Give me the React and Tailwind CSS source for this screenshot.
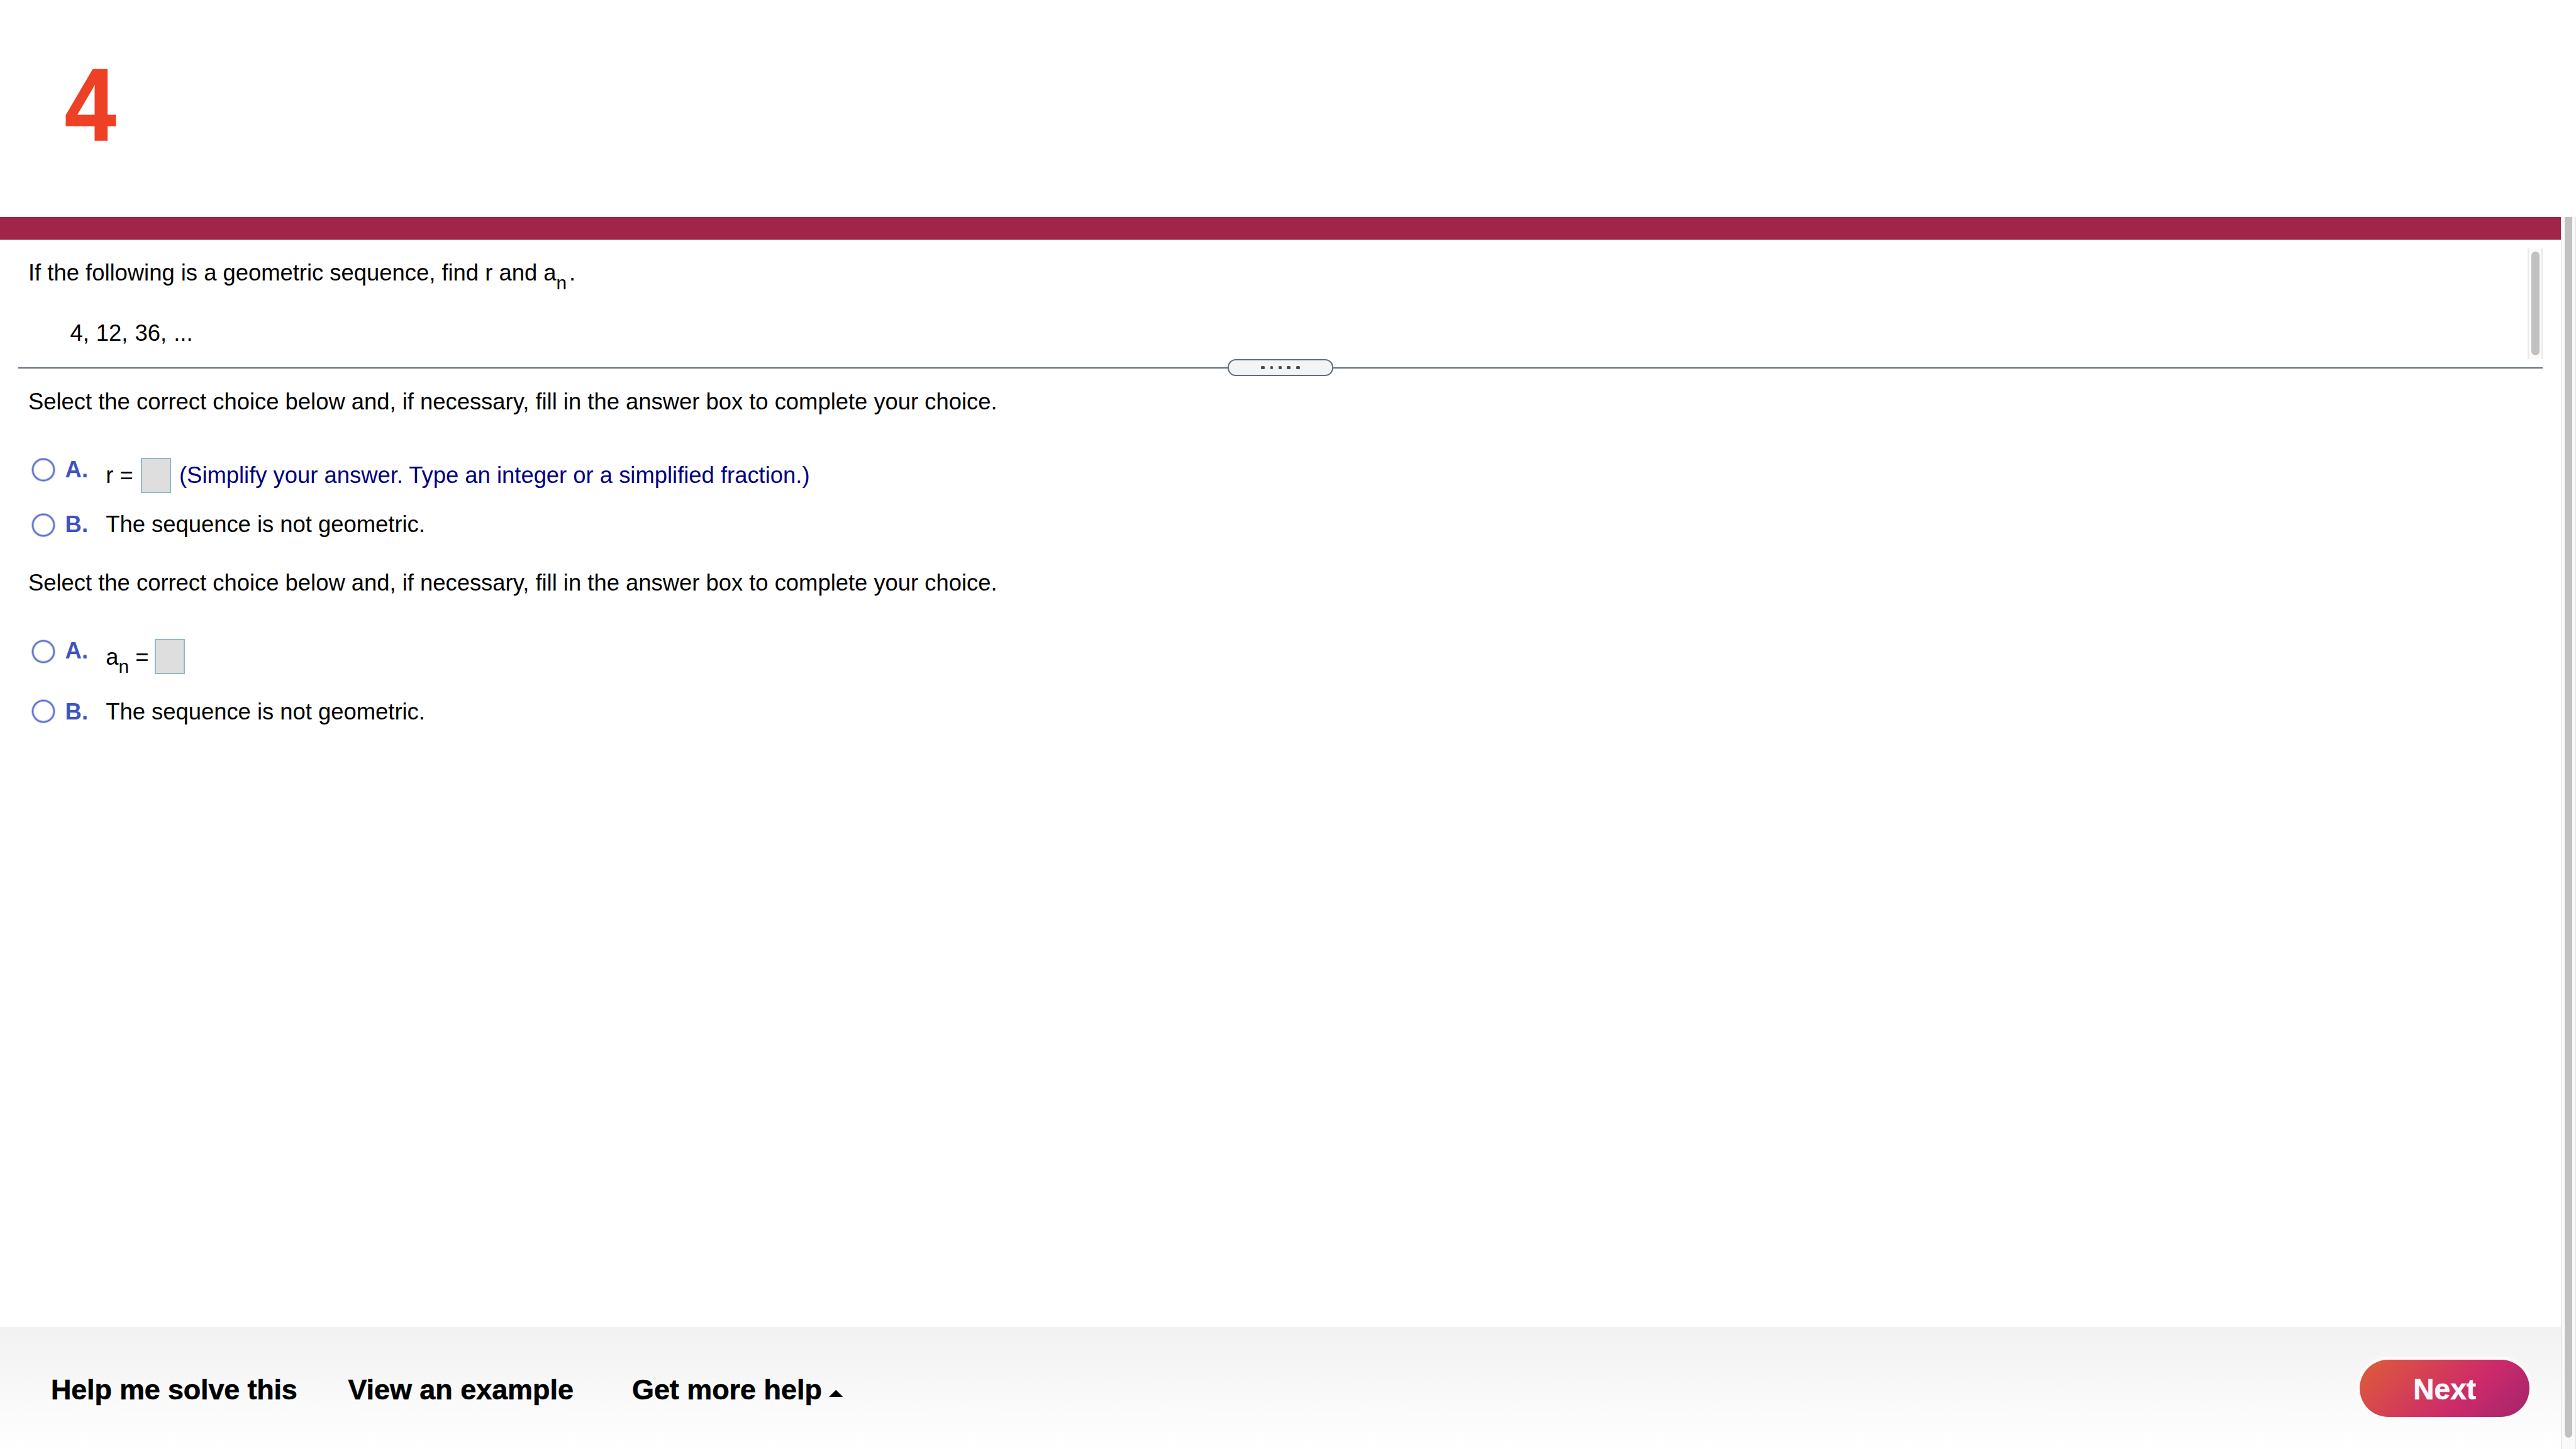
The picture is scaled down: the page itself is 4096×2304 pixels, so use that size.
const TEXT = "font-['Liberation_Sans',Arial,sans-serif]";

function AnswerBox() {
  return <span className="block h-[56px] w-[48px] shrink-0 border-2 border-[#95b7c8] bg-[#dedede]" />;
}

function Choice({ letter, className, radioClass, bodyClass, children }) {
  return (
    <div className={"flex items-start " + className}>
      <span className={"w-[53.6px] shrink-0 " + radioClass}>
        <span className="mx-[1px] block size-[36px] rounded-full border-2 border-[#5b70cd] bg-white shadow-[0_0_0_1px_#a9b5e8,inset_0_0_0_1px_#a9b5e8]" />
      </span>
      <span className="w-[64.6px] shrink-0 font-bold text-[#3c53c0]">{letter}.</span>
      <div className={"flex items-start whitespace-pre " + bodyClass}>{children}</div>
    </div>
  );
}

function QuestionPanel() {
  return (
    <section className="flex h-[201.6px] items-start justify-between pr-[28.8px] pt-[12.8px]">
      <div className="pl-[45px] pt-[16.6px]">
        <p className="h-[44px] whitespace-pre">
          If the following is a geometric sequence, find r and a
          <sub className="relative top-[14.4px] inline-block align-baseline text-[29.8px] leading-none">n</sub>
          <span className="ml-[4px]">.</span>
        </p>
        <p className="mt-[52px] pl-[66.4px] [word-spacing:1px]">4, 12, 36, ...</p>
      </div>
      <div className="flex h-[176px] w-[24px] justify-center border-x-2 border-[#e9e9e9] bg-[#fafafa] pt-[4.8px]">
        <div className="h-[164.8px] w-[12.8px] rounded-full bg-[#c1c1c1]" />
      </div>
    </section>
  );
}

function Divider() {
  return (
    <div className="flex h-[1.6px] items-center pl-[28.8px] pr-[28.8px]">
      <div className="h-[1.6px] flex-1 bg-[#5f6e7b]" />
      <div className="flex h-[27.2px] w-[168px] shrink-0 items-center justify-center gap-[8.4px] rounded-[13px] border-2 border-[#5f6e7b] bg-[#f3f4f6]">
        <i className="h-[5px] w-[6.4px] rounded-[1.5px] bg-[#4a4a4a]" />
        <i className="h-[5px] w-[4.8px] rounded-[1.5px] bg-[#4a4a4a]" />
        <i className="h-[5px] w-[4.8px] rounded-[1.5px] bg-[#4a4a4a]" />
        <i className="h-[5px] w-[6.4px] rounded-[1.5px] bg-[#4a4a4a]" />
        <i className="h-[5px] w-[6.4px] rounded-[1.5px] bg-[#4a4a4a]" />
      </div>
      <div className="h-[1.6px] flex-1 bg-[#5f6e7b]" />
    </div>
  );
}

function Answers() {
  const prompt =
    "Select the correct choice below and, if necessary, fill in the answer box to complete your choice.";
  return (
    <section className="flex flex-1 flex-col pl-[45px] pt-[31px]">
      <p>{prompt}</p>
      <div className="mt-[64.4px] flex flex-col pl-[5px]">
        <Choice letter="A" className="h-[59px]" radioClass="pt-[4px]" bodyClass="pt-[3px]">
          <span className="w-[55.8px] pt-[6.4px]">r =</span>
          <AnswerBox />
          <span className="pl-[13px] pt-[6.4px] text-[#00007f]">
            (Simplify your answer. Type an integer or a simplified fraction.)
          </span>
        </Choice>
        <Choice letter="B" className="mt-[27.6px] h-[44px]" radioClass="pt-[5px]" bodyClass="">
          The sequence is not geometric.
        </Choice>
      </div>
      <p className="mt-[49px]">{prompt}</p>
      <div className="mt-[64.4px] flex flex-col pl-[5px]">
        <Choice letter="A" className="h-[59px]" radioClass="pt-[5.4px]" bodyClass="pt-[3px]">
          <span className="w-[78.2px] pt-[6.8px]">
            a<sub className="relative top-[13px] inline-block align-baseline text-[29.8px] leading-none">n</sub> =
          </span>
          <AnswerBox />
        </Choice>
        <Choice letter="B" className="mt-[37.8px] h-[44px]" radioClass="pt-[3px]" bodyClass="">
          The sequence is not geometric.
        </Choice>
      </div>
    </section>
  );
}

function Footer() {
  return (
    <footer className="flex h-[193.6px] items-start bg-linear-to-b from-[#f1f1f1] to-white pl-[81px] pr-[49.6px] text-[44.9px] font-bold leading-[56px] text-black [-webkit-text-stroke:0.6px]">
      <span className="w-[472.4px] pt-[71.6px] tracking-[-0.14px]">Help me solve this</span>
      <span className="w-[451.6px] pt-[71.6px]">View an example</span>
      <span className="flex items-start pt-[71.6px]">
        Get more help
        <svg className="ml-[11px] mt-[27.6px] h-[11.2px] w-[22.4px]" viewBox="0 0 22 11" preserveAspectRatio="none">
          <path d="M11 0L22 11H0z" fill="#000" />
        </svg>
      </span>
      <button className="ml-auto mt-[51.2px] flex h-[91.2px] w-[270.4px] items-center justify-center rounded-full bg-[linear-gradient(135deg,#de5d38_0%,#cc2a6a_63%,#a2256d_100%)] pt-[3px] text-[46px] font-bold text-[#f8f9fd] ring-[5px] ring-[#fbfbfb]">
        Next
      </button>
    </footer>
  );
}

export default function App() {
  return (
    <div className={"flex h-[2304px] w-[4096px] flex-col overflow-hidden bg-white text-[36.4px] leading-[44px] text-black " + TEXT}>
      <header className="h-[344.8px] shrink-0 pl-[102.5px] pt-[85px] text-[163px] font-bold leading-[164px] text-[#ed4024]">
        <span className="inline-block origin-left scale-x-[0.9] [-webkit-text-stroke:1.5px]">4</span>
      </header>
      <div className="flex min-h-0 flex-1">
        <main className="flex w-[4072px] flex-col">
          <div className="h-[36px] bg-[#a12548]" />
          <div className="h-[1.6px] bg-[#ccd0de]" />
          <QuestionPanel />
          <Divider />
          <Answers />
          <Footer />
        </main>
        <aside className="flex w-[24px] justify-center border-x-2 border-[#e9e9e9] bg-[#fafafa]">
          <div className="h-[1941.6px] w-[12.8px] rounded-b-full bg-[#c1c1c1]" />
        </aside>
      </div>
    </div>
  );
}
